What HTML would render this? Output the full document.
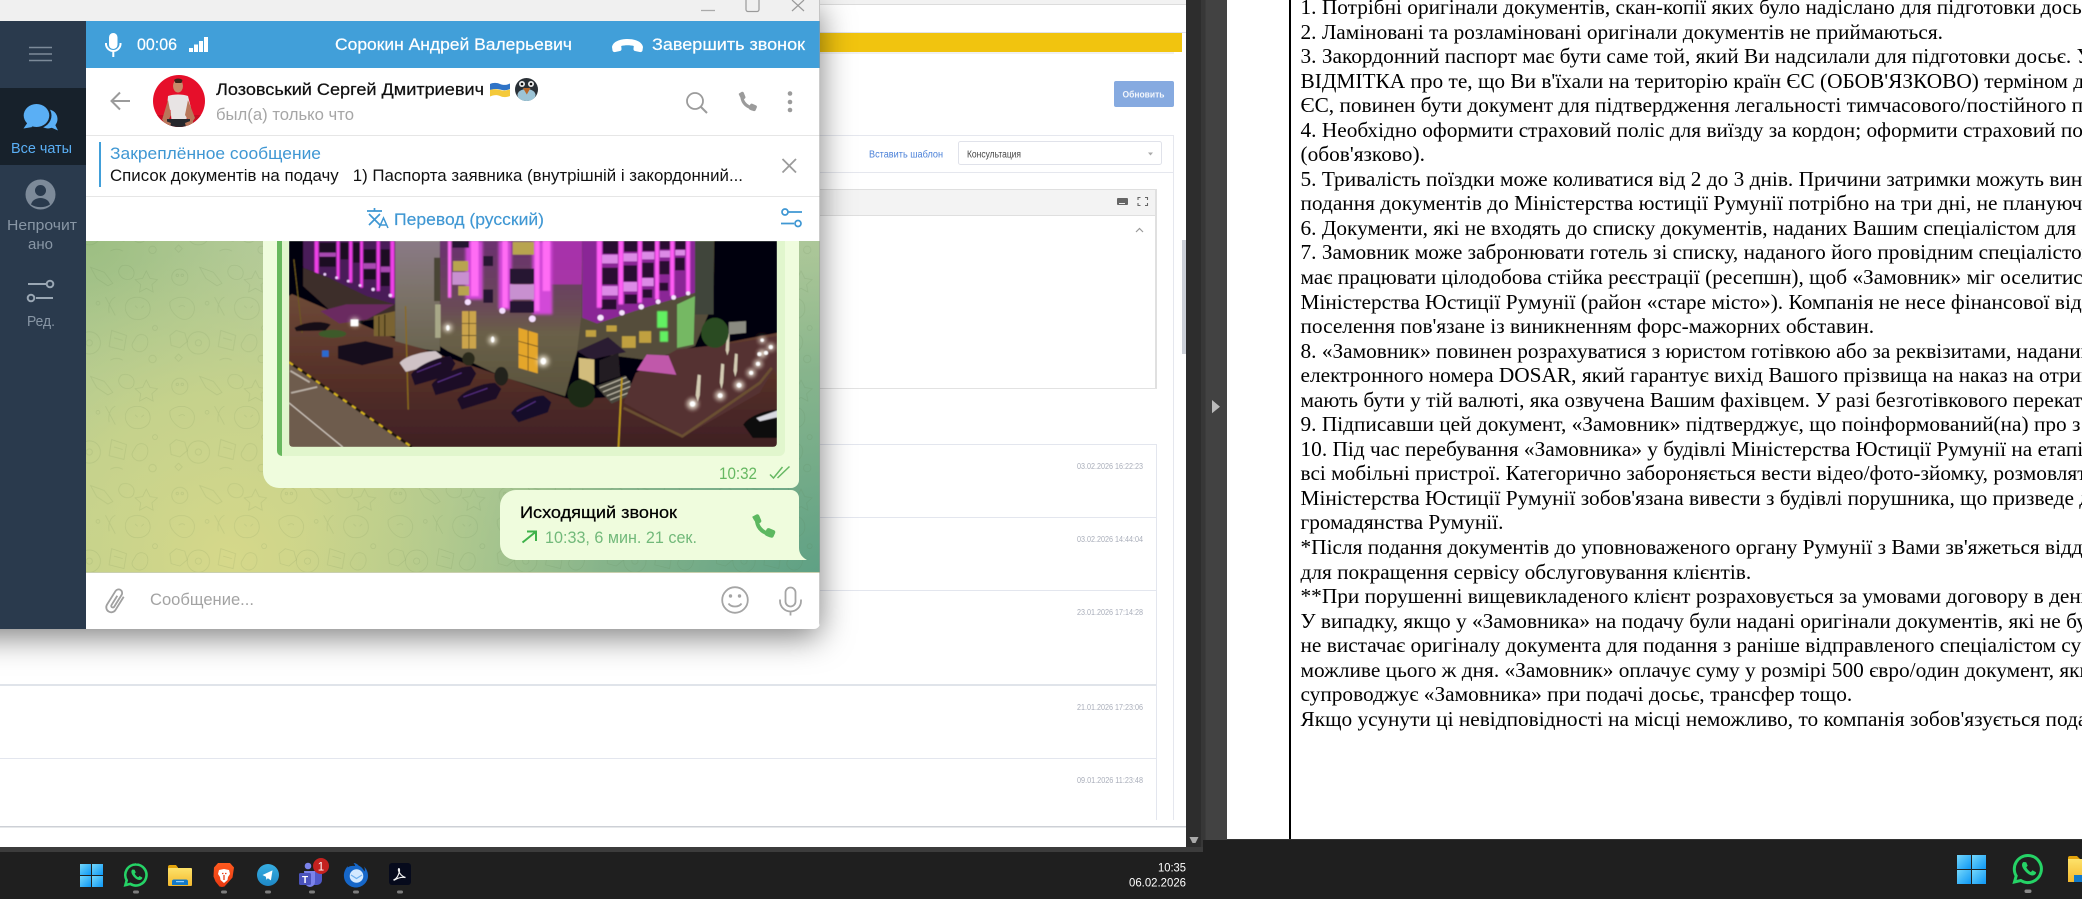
<!DOCTYPE html>
<html lang="ru"><head><meta charset="utf-8"><title>Screen</title>
<style>
html,body{margin:0;padding:0;background:#fff;width:2082px;height:899px;overflow:hidden}
svg{position:absolute;left:0;top:0;display:block}
text{font-family:"Liberation Sans","DejaVu Sans",sans-serif}
#shadow{position:absolute;left:-40px;top:0;width:860px;height:629px;border-radius:8px;box-shadow:0 8px 32px rgba(0,0,0,.5)}
#doc{position:absolute;left:1291px;top:-5px;width:791px;height:844px;overflow:hidden;font:21.33px/24.55px "Liberation Serif",serif;color:#000;white-space:nowrap;padding-left:9.5px;box-sizing:border-box}
#doc div{height:24.55px}
</style></head><body>

<svg width="2082" height="899" viewBox="0 0 2082 899">
  <!-- browser page -->
  <rect x="820" y="0" width="366" height="4" fill="#f2f2f2"/>
  <rect x="820" y="4" width="366" height="1" fill="#dcdcdc"/>
  <rect x="820" y="32" width="366" height="1" fill="#e0e3ec"/>
  <rect x="0" y="33" width="1182" height="19" fill="#f1c40f"/>
  <rect x="0" y="52" width="1174" height="2" fill="#f0f0f0"/>
  <rect x="1114" y="81" width="60" height="26" rx="2" fill="#86aae0"/>
  <text x="1122.5" y="97.5" font-size="9" font-weight="bold" fill="#f4f7fc" textLength="42" lengthAdjust="spacingAndGlyphs">Обновить</text>
  <!-- card -->
  <rect x="0" y="135" width="1173.5" height="1" fill="#e5e7ee"/>
  <rect x="1173" y="135" width="1" height="685" fill="#e5e7ee"/>
  <rect x="0" y="172" width="1173" height="1" fill="#e5e7ee"/>
  <text x="869" y="157.500" font-size="10" fill="#4a80d8" textLength="74" lengthAdjust="spacingAndGlyphs">Вставить шаблон</text>
  <rect x="958.500" y="141.500" width="203" height="23" rx="2" fill="#fff" stroke="#e0e2ea"/>
  <text x="967" y="157.500" font-size="10" fill="#444" textLength="54" lengthAdjust="spacingAndGlyphs">Консультация</text>
  <path d="M1148 152.500h5l-2.500 3z" fill="#aaa"/>
  <!-- editor -->
  <rect x="0" y="189" width="1157" height="26" fill="#f3f3f3"/>
  <rect x="0" y="189" width="1157" height="1" fill="#dfdfdf"/>
  <rect x="0" y="215" width="1156" height="1" fill="#dfdfdf"/>
  <rect x="1155" y="189" width="2" height="200" fill="#e0e0e0"/>
  <rect x="0" y="388" width="1157" height="1" fill="#e2e2e2"/>
  <rect x="1117" y="198" width="11" height="7" rx="1" fill="#666"/>
  <rect x="1119" y="203" width="6" height="1" fill="#eee"/>
  <path d="M1139 200v-2.500h2.500M1146 197.500h2.500v2.500M1148.500 203v2.500h-2.500M1141.500 205.500h-2.500v-2.500" transform="translate(-1 0)" fill="none" stroke="#666" stroke-width="1.100"/>
  <path d="M1136 232l3.500-3.500 3.500 3.500" fill="none" stroke="#999" stroke-width="1.200"/>
  <!-- list -->
  <g fill="#e3e6ee">
    <rect x="0" y="444" width="1157" height="1"/>
    <rect x="1156" y="444" width="1" height="376"/>
    <rect x="0" y="517" width="1156" height="1"/>
    <rect x="0" y="590" width="1156" height="1"/>
    <rect x="0" y="684" width="1156" height="2" fill="#e0e4ea"/>
    <rect x="0" y="758" width="1156" height="1"/>
  </g>
  <rect x="0" y="826" width="1186" height="1.500" fill="#cdd0d6"/>
  <g font-size="8.500" fill="#a9aeba">
    <text x="1077" y="469" textLength="66" lengthAdjust="spacingAndGlyphs">03.02.2026 16:22:23</text>
    <text x="1077" y="542" textLength="66" lengthAdjust="spacingAndGlyphs">03.02.2026 14:44:04</text>
    <text x="1077" y="615" textLength="66" lengthAdjust="spacingAndGlyphs">23.01.2026 17:14:28</text>
    <text x="1077" y="710" textLength="66" lengthAdjust="spacingAndGlyphs">21.01.2026 17:23:06</text>
    <text x="1077" y="783" textLength="66" lengthAdjust="spacingAndGlyphs">09.01.2026 11:23:48</text>
  </g>
  <rect x="1182" y="240" width="4" height="114" fill="#ccd0d8"/>
  <!-- dark gutters -->
  <rect x="1186" y="0" width="15" height="847" fill="#2d2d2d"/>
  <rect x="1201" y="0" width="4.500" height="847" fill="#373737"/>
  <rect x="1205.500" y="0" width="21.500" height="840" fill="#424242"/>
  <path d="M1212 400l8 6.800-8 6.500z" fill="#bbb"/>
  <path d="M1189.500 837h9l-3 6h-3z" fill="#aaa"/>
  <!-- right document frame -->
  <rect x="1289" y="0" width="2" height="839" fill="#000"/>
  <!-- taskbars -->
  <rect x="1203" y="840" width="879" height="59" fill="#1f1f1f"/>
  <rect x="0" y="852" width="1203" height="47" fill="#1f1f1f"/>
  <rect x="0" y="847" width="1203" height="5" fill="#3c3c3c"/>
  <rect x="1227" y="839" width="855" height="1" fill="#333"/>

  <defs>
    <linearGradient id="win" x1="0" y1="0" x2="1" y2="1"><stop offset="0" stop-color="#74d7fb"/><stop offset="1" stop-color="#0c97f5"/></linearGradient>
    <linearGradient id="fold" x1="0" y1="0" x2="0" y2="1"><stop offset="0" stop-color="#fde26a"/><stop offset="1" stop-color="#f4b92e"/></linearGradient>
    <linearGradient id="tg" x1="0" y1="0" x2="0" y2="1"><stop offset="0" stop-color="#37aee2"/><stop offset="1" stop-color="#1e88c6"/></linearGradient>
    <linearGradient id="brv" x1="0" y1="0" x2="0" y2="1"><stop offset="0" stop-color="#ff5a1f"/><stop offset="1" stop-color="#e93a12"/></linearGradient>
  </defs>
  <!-- left taskbar icons -->
  <g fill="url(#win)">
    <rect x="80" y="864" width="11" height="11"/><rect x="92" y="864" width="11" height="11"/>
    <rect x="80" y="876" width="11" height="11"/><rect x="92" y="876" width="11" height="11"/>
  </g>
  <g>
    <path d="M136 864.500a10.500 10.500 0 1 1-5.600 19.400l-5 1.200 1.300-4.800a10.500 10.500 0 0 1 9.300-15.800z" fill="none" stroke="#25d366" stroke-width="2.600"/>
    <path d="M132.500 869.500c-1.500 1-1.500 3 0 5.500s4.500 5 7 5c1.500 0 3-1.200 2.800-2.500l-2.800-1.500-1.200 1.300c-1.500-.6-3-2.300-3.600-3.700l1.100-1.200-1.200-2.700z" fill="#25d366"/>
  </g>
  <g>
    <path d="M168 867a2 2 0 0 1 2-2h6l2 2.500v3h-10z" fill="#e3a30b"/>
    <rect x="168" y="868" width="24" height="18" rx="1" fill="url(#fold)"/>
    <path d="M172 881.500a2 2 0 0 1 2-2h12a2 2 0 0 1 2 2v3.500h-16z" fill="#1279c9"/>
    <rect x="176" y="881" width="8" height="1.200" fill="#8fd0ff"/>
  </g>
  <g>
    <path d="M214 868l4-4.500h12l4 4.500-1.500 10-8 9-2.500.500-2.500-.5-4-5-2-5z" transform="translate(0 -.5)" fill="url(#brv)"/>
    <path d="M219 870l5-1 5 1 1 4-2 3-.5 3-3.500 3-3.500-3-.5-3-2-3z" fill="#fff"/>
    <path d="M222 873.500h1.500M225 873.500h1.500M224 875v5" stroke="#e8401a" stroke-width="1.300"/>
  </g>
  <g>
    <circle cx="268" cy="875" r="11" fill="url(#tg)"/>
    <path d="M262.500 875l10-4.600-1.600 10-3-2.200-1.500 1.500-.5-3z" fill="#fff"/>
  </g>
  <g>
    <circle cx="308" cy="866" r="3.300" fill="#7b83eb"/>
    <circle cx="317" cy="868" r="2.800" fill="#5059c9"/>
    <path d="M312 871h10v9a5 5 0 0 1-5 5h-3z" fill="#5059c9"/>
    <path d="M304 871h11v11a5 5 0 0 1-10 0z" fill="#7b83eb"/>
    <rect x="299" y="873" width="12" height="12" rx="1.500" fill="#4b53bc"/>
    <text x="305" y="883" font-size="10" font-weight="bold" fill="#fff" text-anchor="middle">T</text>
    <circle cx="321" cy="866" r="8" fill="#c4211f"/>
    <text x="321" y="870.500" font-size="11.500" fill="#fff" text-anchor="middle">1</text>
  </g>
  <g>
    <path d="M348 866c-3 3-4.500 7-4 11 .5 6 6 10.500 12 10.500s12-5 12-11.500c0-4-1.500-7-4-9.500 1 2 1 3.500.5 5-1.500-3-3.500-5-6-6-1-1.500-3-2.500-5-2.500 1 1 1.500 2 1.500 3-3-.5-5.500 0-7.500 1.500z" fill="#1667c9"/>
    <circle cx="356.500" cy="876" r="6.800" fill="#d4e9ff"/>
    <path d="M351 875l5.500 3.500 5.500-3.500" fill="none" stroke="#6fb0ee" stroke-width="1.200"/>
  </g>
  <g>
    <rect x="389" y="863" width="22" height="22" rx="3" fill="#060a1c"/>
    <path d="M393.500 880c3-1 5-4 6-9 .2-2-.5-3-1-2-.5 2 2 7 7 8.500-3-.5-7 0-11 2.500z" fill="none" stroke="#f2f2f2" stroke-width="1.200"/>
  </g>
  <g fill="#7d7d7d">
    <rect x="133" y="890.500" width="6" height="3" rx="1.500"/><rect x="221" y="890.500" width="6" height="3" rx="1.500"/>
    <rect x="265" y="890.500" width="6" height="3" rx="1.500"/><rect x="309" y="890.500" width="6" height="3" rx="1.500"/>
    <rect x="353" y="890.500" width="6" height="3" rx="1.500"/><rect x="397" y="890.500" width="6" height="3" rx="1.500"/>
  </g>
  <text x="1158" y="871.500" font-size="12" fill="#fff" textLength="28" lengthAdjust="spacingAndGlyphs">10:35</text>
  <text x="1129" y="886.500" font-size="12" fill="#fff" textLength="57" lengthAdjust="spacingAndGlyphs">06.02.2026</text>

  <!-- right taskbar icons -->
  <g fill="url(#win)">
    <rect x="1957" y="855" width="14" height="14"/><rect x="1972" y="855" width="14" height="14"/>
    <rect x="1957" y="870" width="14" height="14"/><rect x="1972" y="870" width="14" height="14"/>
  </g>
  <g>
    <path d="M2028 855.500a13.500 13.500 0 1 1-7.200 25l-6.300 1.500 1.700-6.100a13.500 13.500 0 0 1 11.800-20.400z" fill="none" stroke="#25d366" stroke-width="3"/>
    <path d="M2023.500 862c-2 1.300-2 4 0 7s5.700 6.500 9 6.500c2 0 3.800-1.600 3.500-3.200l-3.500-2-1.600 1.700c-2-.8-3.800-3-4.600-4.800l1.400-1.500-1.500-3.500z" fill="#25d366"/>
  </g>
  <g>
    <path d="M2068 858a2 2 0 0 1 2-2h7l3 3v4h-12z" fill="#e3a30b"/>
    <rect x="2068" y="859" width="14" height="23" fill="url(#fold)"/>
    <rect x="2074" y="875" width="8" height="7" fill="#1279c9"/>
  </g>
  <rect x="2024.500" y="889.500" width="7" height="3.500" rx="1.700" fill="#8a8a8a"/>
</svg>

<div id="doc">
<div>1. Потрібні оригінали документів, скан-копії яких було надіслано для підготовки досьє.</div>
<div>2. Ламіновані та розламіновані оригінали документів не приймаються.</div>
<div>3. Закордонний паспорт має бути саме той, який Ви надсилали для підготовки досьє. У</div>
<div>ВІДМІТКА про те, що Ви в'їхали на територію країн ЄС (ОБОВ'ЯЗКОВО) терміном до</div>
<div>ЄС, повинен бути документ для підтвердження легальності тимчасового/постійного перебування</div>
<div>4. Необхідно оформити страховий поліс для виїзду за кордон; оформити страховий поліс</div>
<div>(обов'язково).</div>
<div>5. Тривалість поїздки може коливатися від 2 до 3 днів. Причини затримки можуть виникнути</div>
<div>подання документів до Міністерства юстиції Румунії потрібно на три дні, не плануючи</div>
<div>6. Документи, які не входять до списку документів, наданих Вашим спеціалістом для</div>
<div>7. Замовник може забронювати готель зі списку, наданого його провідним спеціалістом</div>
<div>має працювати цілодобова стійка реєстрації (ресепшн), щоб «Замовник» міг оселитися</div>
<div>Міністерства Юстиції Румунії (район «старе місто»). Компанія не несе фінансової відповідальності</div>
<div>поселення пов'язане із виникненням форс-мажорних обставин.</div>
<div>8. «Замовник» повинен розрахуватися з юристом готівкою або за реквізитами, наданими</div>
<div>електронного номера DOSAR, який гарантує вихід Вашого прізвища на наказ на отримання</div>
<div>мають бути у тій валюті, яка озвучена Вашим фахівцем. У разі безготівкового перекату</div>
<div>9. Підписавши цей документ, «Замовник» підтверджує, що поінформований(на) про з</div>
<div>10. Під час перебування «Замовника» у будівлі Міністерства Юстиції Румунії на етапі</div>
<div>всі мобільні пристрої. Категорично забороняється вести відео/фото-зйомку, розмовляти</div>
<div>Міністерства Юстиції Румунії зобов'язана вивести з будівлі порушника, що призведе до</div>
<div>громадянства Румунії.</div>
<div>*Після подання документів до уповноваженого органу Румунії з Вами зв'яжеться відділ</div>
<div>для покращення сервісу обслуговування клієнтів.</div>
<div>**При порушенні вищевикладеного клієнт розраховується за умовами договору в день</div>
<div>У випадку, якщо у «Замовника» на подачу були надані оригінали документів, які не були</div>
<div>не вистачає оригіналу документа для подання з раніше відправленого спеціалістом су</div>
<div>можливе цього ж дня. «Замовник» оплачує суму у розмірі 500 євро/один документ, який</div>
<div>супроводжує «Замовника» при подачі досьє, трансфер тощо.</div>
<div>Якщо усунути ці невідповідності на місці неможливо, то компанія зобов'язується подати</div>
</div>

<div id="shadow"></div>

<svg width="2082" height="899" viewBox="0 0 2082 899">
  <defs>
    <clipPath id="winclip"><path d="M0 0H820V623a6 6 0 0 1-6 6H0z"/></clipPath>
    <clipPath id="chatclip"><rect x="86" y="241" width="734" height="331"/></clipPath>
    <clipPath id="ava"><circle cx="179" cy="101" r="26"/></clipPath>
    <radialGradient id="wgY" gradientUnits="userSpaceOnUse" cx="230" cy="560" r="310"><stop offset="0" stop-color="#d6d88a"/><stop offset=".55" stop-color="#cbd48a" stop-opacity=".75"/><stop offset="1" stop-color="#c0d08c" stop-opacity="0"/></radialGradient>
    <radialGradient id="wgT" gradientUnits="userSpaceOnUse" cx="840" cy="610" r="540"><stop offset="0" stop-color="#559c83"/><stop offset=".45" stop-color="#7fb08a" stop-opacity=".85"/><stop offset=".75" stop-color="#a2c28f" stop-opacity=".4"/><stop offset="1" stop-color="#a8c48e" stop-opacity="0"/></radialGradient>
    <radialGradient id="wgG" gradientUnits="userSpaceOnUse" cx="90" cy="240" r="280"><stop offset="0" stop-color="#9cbe82"/><stop offset="1" stop-color="#a8c488" stop-opacity="0"/></radialGradient>
    <linearGradient id="lightTR" x1="0" y1="0" x2="0" y2="1"><stop offset="0" stop-color="#bfd0a4"/><stop offset="1" stop-color="#b2cb8e"/></linearGradient>
    <pattern id="doodle" patternUnits="userSpaceOnUse" width="176" height="176" x="86" y="241" patternTransform="scale(.62)">
      <g fill="none" stroke="#4e6e3c" stroke-opacity=".12" stroke-width="1.300">
        <circle cx="28" cy="30" r="13"/><circle cx="24" cy="27" r="2"/><circle cx="32" cy="27" r="2"/>
        <path d="M60 14l22 8 14 18-8 4-18-12z"/><path d="M110 12c12-4 22 4 20 14s-16 10-22 2 0-14 2-16z"/>
        <path d="M150 20l6 12 12 2-9 8 2 12-11-6-11 6 2-12-9-8 12-2z"/>
        <path d="M12 70c10-10 28-10 36 0s2 26-10 28-28-14-26-28z"/><path d="M26 78c4-3 8-3 10 0"/>
        <circle cx="72" cy="72" r="3"/><path d="M84 62l16 30M100 62c-8 4-12 14-10 26"/>
        <path d="M122 66c14-8 32-2 34 12s-10 22-24 20-22-20-10-32z"/><path d="M132 76l4 4M146 76l-4 4"/>
        <circle cx="164" cy="112" r="4"/><path d="M12 124l10-8 14 4 4 14-12 10-14-4z"/>
        <path d="M58 118c10 0 18 8 18 18s-8 18-18 18-18-8-18-18 8-18 18-18z"/><circle cx="58" cy="136" r="5"/>
        <path d="M94 116l24 8-4 24-24-6z"/><path d="M98 128l14 4"/>
        <path d="M134 126c6-6 16-4 18 4s-2 18-10 20-18-6-14-14z"/>
        <path d="M20 160l6-6 6 6-6 6z"/><path d="M92 164c6-4 14-4 20 0"/><circle cx="160" cy="162" r="6"/>
      </g>
    </pattern>
    <filter id="pb" x="-2%" y="-2%" width="104%" height="104%"><feGaussianBlur stdDeviation="1.800"/></filter>
    <filter id="gl" x="-60%" y="-60%" width="220%" height="220%"><feGaussianBlur stdDeviation="7"/></filter>
    <filter id="gm" x="-60%" y="-10%" width="220%" height="120%"><feGaussianBlur stdDeviation="4"/></filter>
    <filter id="gs" x="-60%" y="-10%" width="220%" height="120%"><feGaussianBlur stdDeviation="1.500"/></filter>
    <clipPath id="phClip"><path d="M84 15H1500V620a12 12 0 0 1-12 12H96a12 12 0 0 1-12-12z"/></clipPath>
    <linearGradient id="gnd" x1="0" y1="0" x2="0" y2="1"><stop offset="0" stop-color="#6e4a38"/><stop offset=".55" stop-color="#553028"/><stop offset="1" stop-color="#3f2024"/></linearGradient>
    <linearGradient id="pillar" x1="0" y1="0" x2="0" y2="1"><stop offset="0" stop-color="#8a7a86"/><stop offset=".5" stop-color="#7b7268"/><stop offset="1" stop-color="#6a6450"/></linearGradient>
    <linearGradient id="wallM" x1="0" y1="0" x2="0" y2="1"><stop offset="0" stop-color="#6c3070"/><stop offset=".42" stop-color="#6a4a58"/><stop offset=".6" stop-color="#6a6048"/><stop offset="1" stop-color="#5a543e"/></linearGradient>
  </defs>

  <g clip-path="url(#winclip)">
    <!-- title bar -->
    <rect x="0" y="0" width="820" height="21" fill="#f0f0f0"/>
    <path d="M701 10.500h14" stroke="#aaa" stroke-width="1.300"/>
    <rect x="746" y="-3" width="13" height="14.500" rx="2" fill="none" stroke="#9a9a9a" stroke-width="1.200"/>
    <path d="M792 0l12 11M804 0l-12 11" stroke="#9a9a9a" stroke-width="1.200"/>

    <!-- sidebar -->
    <rect x="0" y="21" width="86" height="608" fill="#2a3a4d"/>
    <rect x="0" y="88" width="86" height="77" fill="#17212b"/>
    <path d="M29 47.500h23M29 54h23M29 60.500h23" stroke="#7c8a99" stroke-width="1.500"/>
    <circle cx="48" cy="119" r="9.500" fill="#5aaff5"/>
    <path d="M50 127l8 3.500-3-6z" fill="#5aaff5"/>
    <ellipse cx="37" cy="115.500" rx="14.500" ry="13" fill="#17212b"/>
    <ellipse cx="36.500" cy="115.500" rx="12.800" ry="11.500" fill="#5aaff5"/>
    <path d="M28 122l-4.500 6.500 9-1.500z" fill="#5aaff5"/>
    <text x="11" y="153" font-size="14.500" fill="#5aaff5" textLength="61" lengthAdjust="spacingAndGlyphs">Все чаты</text>
    <circle cx="40.500" cy="194.500" r="15" fill="#7d8a99"/>
    <circle cx="40.500" cy="190.500" r="5.500" fill="#2a3a4d"/>
    <path d="M31 204.500c1-4 5-6.500 9.500-6.500s8.500 2.500 9.500 6.500c-5 3.500-14 3.500-19 0z" fill="#2a3a4d"/>
    <text x="7" y="230" font-size="14.500" fill="#8896a5" textLength="70" lengthAdjust="spacingAndGlyphs">Непрочит</text>
    <text x="28" y="249" font-size="14.500" fill="#8896a5" textLength="25" lengthAdjust="spacingAndGlyphs">ано</text>
    <path d="M28 284h18M36 298h17" stroke="#9aa7b4" stroke-width="2"/>
    <circle cx="50" cy="284" r="3.300" fill="none" stroke="#9aa7b4" stroke-width="2"/>
    <circle cx="31" cy="298" r="3.300" fill="none" stroke="#9aa7b4" stroke-width="2"/>
    <text x="27" y="326" font-size="14.500" fill="#8896a5" textLength="28" lengthAdjust="spacingAndGlyphs">Ред.</text>

    <!-- call bar -->
    <rect x="86" y="21" width="734" height="47" fill="#419fd9"/>
    <rect x="109" y="33" width="8.500" height="16" rx="4.250" fill="#fff"/>
    <path d="M106 43v1.500a7.300 7.300 0 0 0 14.500 0V43M113.300 52v5" fill="none" stroke="#fff" stroke-width="2"/>
    <text x="137" y="50" font-size="16.500" fill="#fff" stroke="#fff" stroke-width=".2" textLength="40" lengthAdjust="spacingAndGlyphs">00:06</text>
    <g fill="#fff"><rect x="189" y="48" width="4" height="4"/><rect x="194" y="44.500" width="4" height="7.500"/><rect x="199" y="41" width="4" height="11"/><rect x="204" y="37" width="4" height="15"/></g>
    <text x="335" y="50" font-size="16.500" fill="#fff" stroke="#fff" stroke-width=".2" textLength="237" lengthAdjust="spacingAndGlyphs">Сорокин Андрей Валерьевич</text>
    <path d="M612 47c1-5.500 8-8 15.500-8s14.500 2.500 15.500 8l-.5 3.500c-.2 1.200-1.500 1.800-2.800 1.500l-4.700-1c-1-.2-1.700-1.200-1.500-2.200l.3-2.800c-3.500-1-9-1-12.600 0l.3 2.800c.2 1-.5 2-1.500 2.200l-4.700 1c-1.300.3-2.600-.3-2.800-1.500z" fill="#fff"/>
    <text x="652" y="50" font-size="16.500" fill="#fff" stroke="#fff" stroke-width=".2" textLength="153" lengthAdjust="spacingAndGlyphs">Завершить звонок</text>

    <!-- chat header -->
    <rect x="86" y="68" width="734" height="173" fill="#fff"/>
    <path d="M130 101H112M120 92.500L111.500 101l8.500 8.500" fill="none" stroke="#9b9b9b" stroke-width="2"/>
    <g clip-path="url(#ava)">
      <rect x="150" y="72" width="60" height="60" fill="#e60f2a"/>
      <rect x="150" y="115" width="60" height="15" fill="#c90c23"/>
      <ellipse cx="178" cy="86" rx="5" ry="6.500" fill="#c98a6a"/>
      <path d="M174 80c2-2 6-2 8.500 0l-1 3h-6z" fill="#3a241a"/>
      <path d="M168 96c5-2 15-2 20 0l3 12-3.500 2-1 10h-15l-1-10-3.500-2z" fill="#e8e4e4"/>
      <path d="M168 100l-6 20 5 3 4-8zM188 100l7 18-4 6-6-9z" fill="#b9775a"/>
      <rect x="167" y="119" width="23" height="10" fill="#26272c"/>
      <path d="M163 120l8 3-1 4-7-2zM193 120l-8 3 1 4 7-2z" fill="#b9775a"/>
    </g>
    <text x="216" y="95" font-size="16.500" fill="#111" stroke="#111" stroke-width=".25" textLength="268" lengthAdjust="spacingAndGlyphs">Лозовський Сергей Дмитриевич</text>
    <g>
      <path d="M490 84c3-1.500 7-1.500 10 0s7 1 10-.5V89c-3 1.500-7 1.500-10 .5s-7-.5-10 .5z" fill="#2f73c6"/>
      <path d="M490 90c3-1 7-1 10 0s7 .5 10-.5v6.500c-3 1.500-7 1.500-10 0s-7-1-10 .5z" fill="#f4c93a"/>
    </g>
    <g>
      <ellipse cx="526.500" cy="89.500" rx="11.500" ry="11.500" fill="#2a3036"/>
      <ellipse cx="526.500" cy="95" rx="9" ry="6" fill="#9cc4d6"/>
      <circle cx="522" cy="84" r="3" fill="#eee"/><circle cx="531" cy="84" r="3" fill="#eee"/>
      <circle cx="522" cy="84" r="1.300" fill="#111"/><circle cx="531" cy="84" r="1.300" fill="#111"/>
      <path d="M523 88h7.500l-3.700 6.500z" fill="#b8682a"/>
    </g>
    <text x="216" y="120" font-size="16.500" fill="#a6a6a6" textLength="138" lengthAdjust="spacingAndGlyphs">был(а) только что</text>
    <circle cx="695" cy="101" r="8" fill="none" stroke="#9b9b9b" stroke-width="1.800"/>
    <path d="M701 107l6 6" stroke="#9b9b9b" stroke-width="2"/>
    <g>
      <path d="M742 95c-.5 6 3 11 10 13" fill="none" stroke="#9b9b9b" stroke-width="3.200"/>
      <path d="M739 93.500l2.500-1.500c1-.5 2 0 2.300.8l1.600 4c.3.800-.1 1.600-.8 2l-2.500 1.200c-1.500-2-2.800-4.200-3.300-5.600-.2-.4 0-.7.200-.900z" fill="#9b9b9b"/>
      <path d="M749 107l1.200-2.400c.4-.8 1.300-1.100 2.100-.8l3.700 1.600c.8.300 1.200 1.300.8 2.100l-1.200 2.800c-.3.700-1 1-1.700.8-1.700-.4-3.500-1.100-4.700-1.900-.4-.3-.4-1.600-.2-2.200z" fill="#9b9b9b"/>
    </g>
    <g fill="#9b9b9b"><circle cx="790" cy="93.500" r="2.300"/><circle cx="790" cy="102" r="2.300"/><circle cx="790" cy="110" r="2.300"/></g>
    <rect x="86" y="135" width="734" height="1" fill="#e6e6e6"/>
    <rect x="99" y="142" width="2" height="45" fill="#419fd9"/>
    <text x="110" y="159" font-size="16.500" fill="#3f97d3" textLength="211" lengthAdjust="spacingAndGlyphs">Закреплённое сообщение</text>
    <text x="110" y="181" font-size="16.500" fill="#111" xml:space="preserve" textLength="633" lengthAdjust="spacingAndGlyphs">Список документів на подачу   1) Паспорта заявника (внутрішній і закордонний...</text>
    <path d="M782.500 159l13.500 13.500M796 159l-13.500 13.500" stroke="#9b9b9b" stroke-width="1.800"/>
    <rect x="86" y="196" width="734" height="1" fill="#e6e6e6"/>
    <g fill="none" stroke="#3f97d3" stroke-width="1.700">
      <path d="M367 211h15M374.500 208v3M369 214l11 11M380 214l-11 11"/>
      <path d="M379 228l4.500-10 4.500 10M380.500 225h6" stroke-width="1.500"/>
    </g>
    <text x="394" y="225" font-size="16.500" fill="#3f97d3" stroke="#3f97d3" stroke-width=".15" textLength="150" lengthAdjust="spacingAndGlyphs">Перевод (русский)</text>
    <g fill="none" stroke="#3f97d3" stroke-width="1.700">
      <circle cx="785" cy="212" r="3"/><path d="M788 212h14M781 223.500h13"/><circle cx="798" cy="223.500" r="3"/>
    </g>

    <!-- chat background -->
    <g clip-path="url(#chatclip)">
      <rect x="86" y="241" width="734" height="331" fill="url(#lightTR)"/>
      <rect x="86" y="241" width="734" height="331" fill="url(#wgG)"/>
      <rect x="86" y="241" width="734" height="331" fill="url(#wgY)"/>
      <rect x="86" y="241" width="734" height="331" fill="url(#wgT)"/>
      <rect x="86" y="241" width="734" height="331" fill="url(#doodle)"/>

      <!-- photo bubble -->
      <path d="M263 230H799V480a8 8 0 0 1-8 8H279a16 16 0 0 1-16-16z" fill="#effcdd"/>
      <path d="M277 230H785V450a6 6 0 0 1-6 6H283a6 6 0 0 1-6-6z" fill="#e1f6cd"/>
      <path d="M277 230h5v226a5 5 0 0 1-5-5z" fill="#68b85e"/>

      <svg x="289" y="241" width="488" height="206" viewBox="84 15 1416 617" preserveAspectRatio="none">
        <g clip-path="url(#phClip)"><g filter="url(#pb)">
          <rect x="84" y="15" width="1416" height="617" fill="#060308"/>
          <polygon points="84,170 420,320 900,490 1060,480 1300,330 1500,290 1500,632 84,632" fill="url(#gnd)"/>
          <polygon points="84,378 440,632 84,632" fill="#6e5c4e"/>
          <path d="M84 378L440 632" stroke="#1d150f" stroke-width="7"/>
          <path d="M84 378L440 632" stroke="#d8b31c" stroke-width="6" stroke-dasharray="14 18"/>
          <path d="M84 500L240 632" stroke="#ddd5cc" stroke-width="3"/>
          <path d="M88 404l56 34M90 470l76-18" stroke="#bdb3a8" stroke-width="5"/>

          <!-- left wing -->
          <polygon points="120,15 392,15 392,205 310,185 200,125 125,95" fill="#4a1a58"/>
          <polygon points="84,15 125,15 125,150 84,180" fill="#060308"/>
          <g fill="#1c0e22"><rect x="172" y="20" width="48" height="30"/><rect x="172" y="62" width="48" height="30"/><rect x="233" y="20" width="24" height="50"/><rect x="270" y="20" width="20" height="60"/><rect x="300" y="40" width="36" height="40"/><rect x="350" y="40" width="27" height="50"/><rect x="350" y="110" width="27" height="40"/><rect x="300" y="100" width="36" height="30"/></g>
          <g fill="#a848b0"><rect x="172" y="50" width="48" height="12"/><rect x="300" y="82" width="36" height="16"/><rect x="350" y="92" width="27" height="16"/></g>
          <g fill="#f040e8" filter="url(#gs)">
            <rect x="158" y="15" width="12" height="100"/><rect x="222" y="15" width="9" height="115"/>
            <rect x="258" y="15" width="10" height="125"/><rect x="290" y="15" width="9" height="140"/>
            <rect x="338" y="15" width="10" height="150"/><rect x="378" y="15" width="12" height="170"/>
          </g>
          <polygon points="125,95 200,125 310,180 392,205 392,240 300,255 200,220 125,150" fill="#3e2e2c"/>
          <polygon points="175,225 250,205 390,205 310,250 230,262" fill="#6a2c60"/>
          <polygon points="330,240 392,225 392,300 330,300" fill="#7a6430"/>
          <path d="M345 240v60M362 235v65" stroke="#2a2010" stroke-width="3"/>
          <g fill="#f0d0ff"><circle cx="188" cy="115" r="4"/><circle cx="222" cy="125" r="4"/><circle cx="256" cy="135" r="4"/><circle cx="290" cy="148" r="4"/><circle cx="328" cy="160" r="5"/><circle cx="378" cy="178" r="5"/></g>

          <!-- centre pillar -->
          <polygon points="392,15 522,15 522,345 480,340 392,315" fill="url(#pillar)"/>
          <!-- mid wing -->
          <polygon points="522,15 935,15 935,290 885,480 700,420 545,345 522,330" fill="url(#wallM)"/>
          <rect x="840" y="15" width="95" height="130" fill="#c030c4" opacity=".7"/>
          <g fill="#d24ad8" filter="url(#gm)">
            <rect x="596" y="15" width="50" height="175"/><rect x="692" y="15" width="38" height="205"/>
            <rect x="790" y="15" width="58" height="220"/>
          </g>
          <g fill="#c890d0"><rect x="725" y="145" width="70" height="45"/><rect x="558" y="108" width="48" height="38"/></g>
          <g fill="#251330"><rect x="725" y="98" width="70" height="45"/><rect x="558" y="15" width="48" height="20"/><rect x="648" y="60" width="28" height="30"/><rect x="648" y="160" width="28" height="40"/><rect x="725" y="195" width="70" height="35"/></g>
          <g fill="#b8a450"><rect x="733" y="18" width="62" height="38"/><rect x="560" y="75" width="44" height="30"/><rect x="575" y="150" width="32" height="28"/></g>
          <g fill="#ff6cf4" filter="url(#gs)">
            <rect x="612" y="15" width="22" height="165"/><rect x="703" y="15" width="16" height="200"/>
            <rect x="797" y="15" width="14" height="210"/><rect x="820" y="15" width="22" height="150"/><rect x="545" y="15" width="10" height="170"/>
          </g>
          <rect x="505" y="65" width="18" height="130" fill="#4a4436"/>
          <rect x="508" y="205" width="16" height="100" fill="#a8a888"/>
          <g fill="#f6e0ff"><circle cx="603" cy="198" r="9"/><circle cx="703" cy="224" r="9"/><circle cx="790" cy="248" r="10"/></g>
          <rect x="586" y="225" width="41" height="112" fill="#cba44c"/>
          <path d="M606 225v112M586 262h41M586 298h41" stroke="#4a3a20" stroke-width="2"/>
          <polygon points="750,275 806,292 806,412 750,395" fill="#e4a62c"/>
          <path d="M778 283v120M750 315l56 16M750 355l56 16" stroke="#4a3a20" stroke-width="2"/>

          <!-- right wing -->
          <polygon points="935,15 1318,15 1315,200 1262,330 1130,372 920,345 932,240" fill="#544e3a"/>
          <polygon points="935,15 1262,15 1262,170 1130,210 978,262 935,245" fill="#8a2896"/>
          <g fill="#2a1030">
            <rect x="995" y="15" width="45" height="38"/><rect x="1056" y="15" width="40" height="32"/><rect x="1110" y="15" width="36" height="30"/><rect x="1160" y="15" width="30" height="25"/><rect x="1205" y="15" width="30" height="25"/>
            <rect x="992" y="95" width="46" height="50"/><rect x="1054" y="88" width="40" height="48"/><rect x="1108" y="80" width="34" height="44"/><rect x="1158" y="75" width="30" height="40"/><rect x="1204" y="65" width="28" height="38"/>
            <rect x="990" y="190" width="44" height="30"/><rect x="1058" y="175" width="36" height="28"/><rect x="1110" y="160" width="28" height="25"/><rect x="1158" y="140" width="26" height="24"/>
          </g>
          <g fill="#dc8ae6"><rect x="992" y="56" width="46" height="26"/><rect x="1054" y="52" width="40" height="24"/><rect x="1108" y="48" width="36" height="22"/><rect x="1160" y="44" width="30" height="20"/><rect x="1205" y="42" width="28" height="16"/><rect x="1054" y="138" width="40" height="28"/><rect x="992" y="150" width="46" height="28"/><rect x="1108" y="126" width="34" height="24"/></g>
          <g fill="#ff5cf4" filter="url(#gs)">
            <rect x="977" y="15" width="15" height="200"/><rect x="1040" y="15" width="14" height="190"/><rect x="1096" y="15" width="12" height="185"/>
            <rect x="1146" y="15" width="12" height="175"/><rect x="1190" y="15" width="12" height="165"/><rect x="1236" y="15" width="12" height="155"/>
          </g>
          <g fill="#f8e4ff"><circle cx="988" cy="245" r="9"/><circle cx="1050" cy="230" r="8"/><circle cx="1106" cy="212" r="8"/><circle cx="1155" cy="197" r="7"/><circle cx="1200" cy="184" r="7"/><circle cx="1242" cy="172" r="6"/></g>
          <rect x="1262" y="15" width="54" height="220" fill="#3f453a"/>
          <polygon points="1210,205 1262,180 1258,325 1210,335" fill="#74b864"/>
          <g fill="#62f062" filter="url(#gs)"><rect x="1152" y="225" width="30" height="50"/><rect x="1160" y="285" width="24" height="32"/></g>
          <g fill="#c0a040"><rect x="945" y="282" width="30" height="20"/><rect x="1005" y="268" width="30" height="18"/><rect x="1050" y="300" width="40" height="35"/><rect x="1100" y="285" width="35" height="35"/></g>
          <polygon points="920,345 1010,303 1062,348 960,370" fill="#2c1b30"/>
          <polygon points="925,365 970,370 970,445 925,425" fill="#d2bc7c"/>
          <polygon points="985,372 1040,350 1045,420 985,440" fill="#221a20"/>
          <polygon points="975,450 1060,418 1095,468 1020,502" fill="#4a463e"/>
          <path d="M985 455l78-32M995 467l78-32M1006 479l78-32M1016 491l74-30" stroke="#c8c2b0" stroke-width="3"/>

          <!-- terrace -->
          <polygon points="1055,500 1230,600 1450,470 1490,400 1500,420 1500,300 1380,320 1210,340 1090,410" fill="#543030"/>
          <path d="M1055 515l170 85 225-160 35-45" fill="none" stroke="#6a5030" stroke-width="8"/>
          <polygon points="1093,402 1122,355 1185,358 1208,416" fill="#c058aa"/>
          <g fill="#d4ccb4"><path d="M1270 415l9 2-3 60-6 20-6-20z"/><path d="M1338 382l9 2-3 55-5 20-5-20z"/><path d="M1378 352l8 2-2 50-5 18-5-18z"/><path d="M1355 290l7 2-1 50-5 16-5-16z"/></g>
          <ellipse cx="1320" cy="290" rx="40" ry="45" fill="#2c4c20"/>
          <ellipse cx="932" cy="472" rx="40" ry="42" fill="#1f2a15"/>
          <ellipse cx="700" cy="420" rx="20" ry="28" fill="#20241a"/>
          <ellipse cx="605" cy="368" rx="18" ry="20" fill="#2a2a1a"/>
          <ellipse cx="210" cy="293" rx="40" ry="12" fill="#3e5a2a"/>
          <polygon points="1360,258 1410,255 1410,290 1360,295" fill="#8a8a80"/>
          <!-- poles -->
          <path d="M1050 425L1040 632" stroke="#c09a18" stroke-width="5"/>
          <path d="M422 210L430 520" stroke="#8a6a1c" stroke-width="4"/>
          <path d="M98 70L122 290" stroke="#6e5a1c" stroke-width="3"/>
          <!-- cars -->
          <rect x="180" y="343" width="19" height="19" fill="#2a6ad0"/>
          <path d="M226 330l80-15 80 20v30l-90 22-70-20z" fill="#150f1a"/>
          <path d="M405 380c15-20 70-35 105-35l18 15-10 22-95 25z" fill="#cfc2c6"/>
          <path d="M100 275c25-15 70-25 105-10l-15 18-85 2z" fill="#120e18"/>
          <path d="M438 415c15-25 80-55 115-55l14 22-18 35-100 30z" fill="#1b1028"/>
          <path d="M498 445c15-25 75-55 115-55l14 22-18 35-100 30z" fill="#1b1028"/>
          <path d="M572 490c15-25 70-50 110-50l18 18-15 30-100 32z" fill="#1b1028"/>
          <path d="M728 530c15-25 60-52 95-52l22 20-10 30-85 30z" fill="#14102a"/>
          <g stroke="#5a3088" stroke-width="3" fill="none"><path d="M455 408l70-28M515 438l70-28M590 482l70-26M745 525l55-30"/></g>
          <path d="M1402 565c15-25 60-42 98-45v85l-70 0z" fill="#0c0b10"/>
          <path d="M1440 545l60-22v20l-50 12z" fill="#d8d8e0"/>
          <!-- glows -->
          <g fill="#fff7e4" filter="url(#gl)" opacity=".9"><circle cx="1255" cy="503" r="16"/><circle cx="1335" cy="478" r="14"/><circle cx="1390" cy="447" r="14"/><circle cx="1425" cy="410" r="12"/><circle cx="1445" cy="383" r="12"/><circle cx="1457" cy="352" r="12"/><circle cx="1482" cy="333" r="11"/><circle cx="1457" cy="312" r="10"/><circle cx="822" cy="375" r="16"/><circle cx="675" cy="312" r="12"/><circle cx="545" cy="275" r="12"/><circle cx="275" cy="258" r="12"/></g>
          <g fill="#fff"><circle cx="1255" cy="503" r="8"/><circle cx="1335" cy="478" r="7"/><circle cx="1390" cy="447" r="7"/><circle cx="1425" cy="410" r="6"/><circle cx="1445" cy="383" r="6"/><circle cx="1449" cy="354" r="6"/><circle cx="1468" cy="350" r="6"/><circle cx="1482" cy="333" r="6"/><circle cx="1457" cy="312" r="5"/><ellipse cx="822" cy="375" rx="8" ry="10"/><ellipse cx="675" cy="310" rx="5" ry="9"/><ellipse cx="545" cy="275" rx="5" ry="8"/><rect x="263" y="250" width="22" height="20"/></g>
        </g></g>
      </svg>

      <!-- time -->
      <text x="719" y="479" font-size="16.500" fill="#66b862" textLength="38" lengthAdjust="spacingAndGlyphs">10:32</text>
      <path d="M770 474.500l3.500 3.500 9-11M777.500 478l12-11.500" fill="none" stroke="#66b862" stroke-width="1.500"/>

      <!-- call bubble -->
      <path d="M516 490H791a8 8 0 0 1 8 8v50c0 6 4 10 8 12H516a16 16 0 0 1-16-16V506a16 16 0 0 1 16-16z" fill="#effcdd"/>
      <text x="520" y="518" font-size="16.500" fill="#000" stroke="#000" stroke-width=".25" textLength="157" lengthAdjust="spacingAndGlyphs">Исходящий звонок</text>
      <path d="M522.500 542.500L535.500 532M527 531.500h9v9.500" fill="none" stroke="#3eb24a" stroke-width="2"/>
      <text x="545" y="543" font-size="16.500" fill="#72b97a" textLength="152" lengthAdjust="spacingAndGlyphs">10:33, 6 мин. 21 сек.</text>
      <path d="M757 519c-.5 7 4 13 13 15.500" fill="none" stroke="#5cb860" stroke-width="4"/>
      <path d="M752.700 516.500l3.600-2c1.200-.6 2.400-.1 2.900 1l2 4.800c.4 1 0 2-.9 2.500l-3.300 1.500c-2-2.500-3.800-5.300-4.600-7-.3-.5-.1-.6.300-.8z" fill="#5cb860"/>
      <path d="M765 532.500l1.600-3.200c.5-1 1.700-1.400 2.700-1l4.800 2c1.100.5 1.500 1.700 1 2.800l-1.600 3.500c-.4.900-1.300 1.300-2.200 1-2.300-.5-4.500-1.400-6-2.400-.5-.4-.5-2-.3-2.700z" fill="#5cb860"/>
    </g>

    <!-- input -->
    <rect x="86" y="572" width="734" height="57" fill="#fff"/>
    <rect x="86" y="572" width="734" height="1" fill="#c9cfae"/>
    <path transform="rotate(32 115.500 600.500)" d="M120.500 593v15.500a5 5 0 0 1-10 0v-16a3.600 3.600 0 0 1 7.200 0v14a1.600 1.600 0 0 1-3.200 0v-11" fill="none" stroke="#a0a0a0" stroke-width="1.800"/>
    <text x="150" y="605" font-size="16.500" fill="#a3a3a3" textLength="104" lengthAdjust="spacingAndGlyphs">Сообщение...</text>
    <circle cx="735" cy="600" r="12.800" fill="none" stroke="#a5a5a5" stroke-width="1.800"/>
    <circle cx="730.500" cy="596" r="1.700" fill="#a5a5a5"/><circle cx="739.500" cy="596" r="1.700" fill="#a5a5a5"/>
    <path d="M728.500 603.500c2.500 4 10.500 4 13 0" fill="none" stroke="#a5a5a5" stroke-width="1.800"/>
    <rect x="785.500" y="587.500" width="10" height="19" rx="5" fill="none" stroke="#a5a5a5" stroke-width="1.800"/>
    <path d="M780 599.500v1.500a10.500 10.500 0 0 0 21 0v-1.500M790.500 611.500v4" fill="none" stroke="#a5a5a5" stroke-width="1.800"/>
    <rect x="819.500" y="0" width=".7" height="629" fill="#9a9a9a"/>
  </g>
</svg>
</body></html>
